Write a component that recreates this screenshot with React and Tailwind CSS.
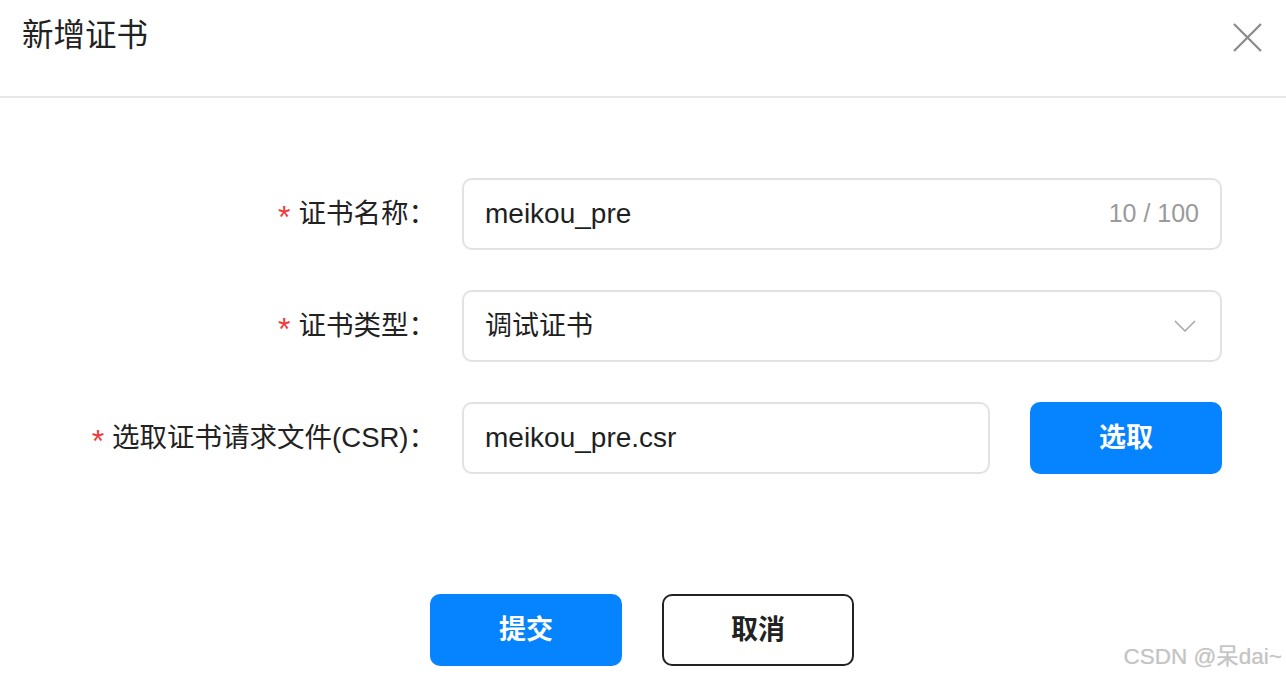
import React from 'react'

const font = "font-['Liberation_Sans','Noto_Sans_CJK_SC',sans-serif]"

function Label({ children }) {
  return (
    <div className="w-[436px] shrink-0 flex justify-end items-center text-[27.5px] text-[#222] leading-none">
      <span className="text-[#f03a3a] text-[32px] mr-[8px] relative top-[3px]">*</span>
      <span>{children}</span>
    </div>
  )
}

export default function App() {
  return (
    <div className={`${font} relative w-full h-[676px] bg-white overflow-hidden`}>
      <div className="flex items-center justify-between h-[98px] pl-[22px] pr-[23px] border-b-2 border-[#e8e8e8]">
        <h1 className="text-[31.5px] text-[#222] leading-none -mt-[24px]">新增证书</h1>
        <svg width="31" height="31" viewBox="0 0 31 31" className="-mt-[22px]" aria-hidden="true">
          <path d="M2 2 L29 29 M29 2 L2 29" stroke="#8a8a8a" strokeWidth="2.2" fill="none" />
        </svg>
      </div>

      <div className="flex flex-col gap-[40px] pt-[80px]">
        <div className="flex items-center h-[72px]">
          <Label>证书名称：</Label>
          <div className="ml-[26px] w-[760px] h-[72px] flex items-center justify-between px-[21px] border-2 border-[#e2e2e2] rounded-[10px]">
            <span className="text-[28px] text-[#1f1f1f]">meikou_pre</span>
            <span className="text-[25px] text-[#9a9a9a]">10 / 100</span>
          </div>
        </div>

        <div className="flex items-center h-[72px]">
          <Label>证书类型：</Label>
          <div className="ml-[26px] w-[760px] h-[72px] flex items-center justify-between pl-[21px] pr-[24px] border-2 border-[#e2e2e2] rounded-[10px]">
            <span className="text-[27px] text-[#1f1f1f]">调试证书</span>
            <svg width="22" height="12" viewBox="0 0 22 12" aria-hidden="true">
              <path d="M1 1 L11 11 L21 1" stroke="#a0a0a0" strokeWidth="1.4" fill="none" />
            </svg>
          </div>
        </div>

        <div className="flex items-center h-[72px]">
          <Label>选取证书请求文件(CSR)：</Label>
          <div className="ml-[26px] w-[528px] h-[72px] flex items-center px-[21px] border-2 border-[#e2e2e2] rounded-[10px]">
            <span className="text-[28px] text-[#1f1f1f]">meikou_pre.csr</span>
          </div>
          <button className="ml-[40px] w-[192px] h-[72px] rounded-[10px] bg-[#0683fe] text-white text-[27px] font-bold">
            选取
          </button>
        </div>
      </div>

      <div className="flex justify-center gap-[40px] mt-[120px] pr-[2px]">
        <button className="w-[192px] h-[72px] rounded-[10px] bg-[#0683fe] text-white text-[27px] font-bold">
          提交
        </button>
        <button className="w-[192px] h-[72px] rounded-[10px] border-2 border-[#222] bg-white text-[#222] text-[27px] font-bold">
          取消
        </button>
      </div>

      <div className="absolute right-[4px] bottom-[8px] text-[22.5px] text-[#c4c4c4] leading-none [text-shadow:0_0_1px_rgba(0,0,0,0.15)]">
        CSDN @呆dai~
      </div>
    </div>
  )
}
